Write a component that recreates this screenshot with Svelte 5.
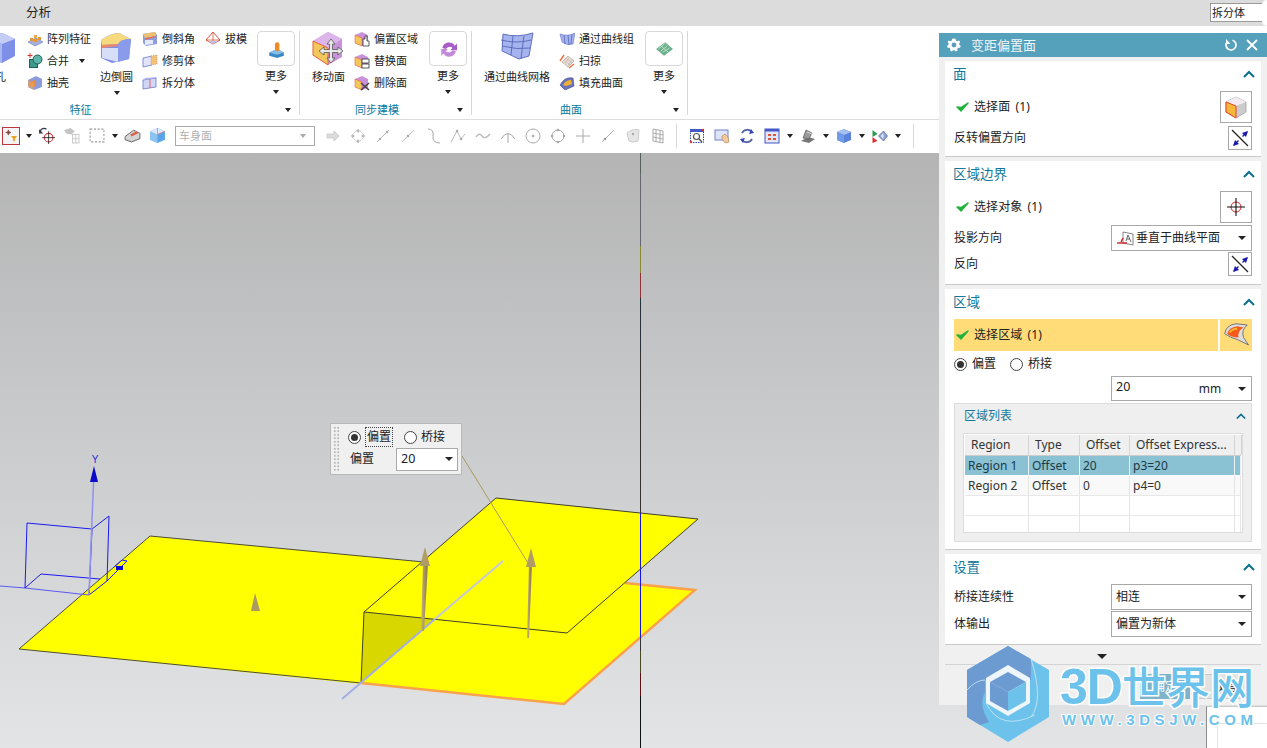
<script>
  const icons = {
    cube: '<path d="M5 8 20 2 33 8V25L20 32 5 26z" fill="#7d8fe6"/><path d="M5 8 20 2 33 8 20 13z" fill="#c3cdf5"/><path d="M5 8 20 13V32L5 26z" fill="#a9b6f0"/>',
    pattern: '<path d="M1 11 9 7 16 11 8 15z" fill="#a6afd8" stroke="#6a78b8" stroke-width=".6"/><rect x="3" y="7" width="3" height="3" fill="#e8963a"/><rect x="7" y="8" width="3" height="3" fill="#e8963a"/><rect x="7" y="4" width="3" height="3" fill="#f0a850"/><rect x="11" y="6" width="3" height="3" fill="#e8963a"/>',
    merge: '<rect x="2.500" y="6.500" width="8" height="8" fill="#3d9a8f" stroke="#1f5f58"/><circle cx="10.500" cy="6.500" r="4.500" fill="#5cb3a8" stroke="#1f5f58"/><path d="M3 0V5M.5 2.500H5.500" stroke="#d33" stroke-width="1"/>',
    shell: '<path d="M1 5 9 1 15 4V12L7 15 1 12z" fill="#8c9bdc"/><path d="M3 7 8 5V12L3 11z" fill="#e99040"/><path d="M1 5 7 8V15L1 12z" fill="#e6a060" opacity=".7"/>',
    blend: '<path d="M2 9Q12 2 20 2L32 8 30 28 13 32 2 27z" fill="#7e8ee8"/><path d="M2 9Q10 3 20 2L32 8Q22 8 19 13L3 14z" fill="#f7d97e"/><path d="M3 14 19 13 19 15 3 17z" fill="#ef8a64"/><path d="M3 17H19V31L3 27z" fill="#d6def8"/><path d="M19 14Q21 8 32 8L30 28 19 31z" fill="#8a9bec"/>',
    chamfer: '<path d="M1 3 13 1 15 4V13L4 15 1 12z" fill="#8d9de4"/><path d="M1 3 13 1 14 5 3 7z" fill="#f0c070"/><path d="M3 7 14 5V6L3 9z" fill="#e57050"/><path d="M3 9H11V13L3 14z" fill="#e4e9fb"/>',
    trim: '<path d="M1 5 10 3V12L1 14z" fill="#dfe4f8" stroke="#6a78c8" stroke-width=".8"/><path d="M9 3 15 2V11L9 12z" fill="#f3c177" stroke="#d88" stroke-width=".8" stroke-dasharray="1 1"/>',
    split: '<path d="M1 5 14 3V12L1 14z" fill="#cfd7f6" stroke="#6a78c8" stroke-width=".8"/><path d="M8 4V13" stroke="#d66" stroke-width="1"/><path d="M1 5 3 3 15 2 14 3z" fill="#a9b6f0"/>',
    draft: '<path d="M1 9 8 1 15 9 8 13z" fill="#fff" stroke="#d9533f"/><path d="M1 9 15 9M8 1V13" stroke="#d9533f" stroke-width=".8"/><path d="M3 10 8 13 13 10z" fill="#b9c3ee"/>',
    more1: '<path d="M2 11 9 8 15 11V14L9 16 2 14z" fill="#3a88c6"/><path d="M2 11 9 8 15 11 9 13z" fill="#86bde6"/><rect x="7" y="2" width="4" height="8" rx="2" fill="#f08a24"/>',
    move: '<path d="M2 10 17 1 31 8V26L17 34 2 24z" fill="#c993dc"/><path d="M2 10 17 1 31 8 17 17z" fill="#dcb6ea"/><path d="M2 10 17 17V34L2 24z" fill="#f2c75c" stroke="#e8613f"/><path d="M20 8l4 5h-2.500v5.500H27V16l5 4-5 4v-2.500h-5.500V27H24l-4 5-4-5h2.500v-5.500H13V24l-5-4 5-4v2.500h5.500V13H16z" fill="#e8e8e8" stroke="#555" stroke-width=".8"/>',
    off1: '<path d="M1 4 8 1 14 4V13L8 15 1 12z" fill="#c993dc"/><path d="M1 4 8 7V15L1 12z" fill="#f2c75c" stroke="#e8613f" stroke-width=".6"/><path d="M9 8h2V5h2v5h2v5H9z" fill="#fff" stroke="#333" stroke-width=".8"/>',
    off2: '<path d="M1 4 8 1 14 4V13L8 15 1 12z" fill="#c993dc"/><path d="M1 4 8 7V15L1 12z" fill="#f2c75c" stroke="#e8613f" stroke-width=".6"/><rect x="8" y="6" width="7" height="4" fill="#fff" stroke="#333" stroke-width=".8"/><rect x="8" y="11" width="7" height="4" fill="#fff" stroke="#333" stroke-width=".8"/>',
    off3: '<path d="M1 4 8 1 14 4V13L8 15 1 12z" fill="#c993dc"/><path d="M1 4 8 7V15L1 12z" fill="#f2c75c" stroke="#e8613f" stroke-width=".6"/><path d="M7 8 15 15M15 8 7 15" stroke="#444" stroke-width="1.500"/>',
    more2: '<path d="M3 7A6 6 0 0 1 14 5L16 3V9H10L12 7A4 4 0 0 0 6 8z" fill="#a85cc8"/><path d="M15 10A6 6 0 0 1 4 12L2 14V8H8L6 10A4 4 0 0 0 12 9z" fill="#c48ad8"/>',
    mesh: '<path d="M4 3Q18 7 34 2L30 25 20 28 3 20z" fill="#a5b4ee" stroke="#6070c0"/><path d="M2 9Q18 13 32 9M3 15Q18 19 31 17M14 5 12 24M25 5 22 27" fill="none" stroke="#5566b8" stroke-width=".9"/>',
    thru: '<path d="M1 3Q9 6 16 2L14 13Q8 15 3 11z" fill="#a5b4ee" stroke="#6070c0" stroke-width=".6"/><path d="M5 4 6 13M9 4 10 14M13 3 12 13" stroke="#5566b8" stroke-width=".8"/>',
    sweep: '<path d="M3 9 9 3 15 8 9 14z" fill="#e6e0dc" stroke="#b9a9a0" stroke-width=".8"/><path d="M5 7 11 12M7 5 13 10M6 10 10 5M9 12 13 7" stroke="#c8a898" stroke-width=".6"/><path d="M1 8 5 2M10 15 15 11" stroke="#e8703a" stroke-width="1.400"/>',
    fill: '<path d="M1 10Q6 1 14 3L15 11 6 15z" fill="#6b74b8" stroke="#3d4590" stroke-width=".6"/><path d="M4 10Q7 5 12 5L13 9 7 11z" fill="#f0b030"/>',
    more3: '<path d="M1 8 9 2 16 8 8 14z" fill="#6ab08a"/><path d="M3 8 9 3M5 10 11 5M7 11 13 7M5 5 12 11" stroke="#d5ead9" stroke-width=".7"/>',
    filter: '<path d="M5 1V7M2 4H8" stroke="#444" stroke-width="1"/><circle cx="5" cy="4" r="1.800" fill="none" stroke="#d33"/><path d="M8 8H15L12.500 11V14H10.500V11z" fill="#e8a020"/>',
    rotsel: '<path d="M2 4Q4 0 8 2" fill="none" stroke="#334" stroke-width="1.200"/><path d="M1 2V6H5z" fill="#334"/><circle cx="10" cy="10" r="4" fill="none" stroke="#d33"/><path d="M10 4V16M4 10H16" stroke="#222" stroke-width=".8"/>',
    grayhand: '<path d="M1 3 7 1 11 4 8 7 3 6z" fill="#c4c4c4"/><rect x="9" y="7" width="6" height="8" fill="none" stroke="#ccc"/><path d="M12 7V15M9 11H15" stroke="#ccc"/>',
    dashrect: '<rect x="2" y="2" width="13" height="12" fill="none" stroke="#999" stroke-dasharray="2 1.500"/>',
    wedge: '<path d="M1 9 9 3 15 6 15 11 7 14 1 12z" fill="#d4d4d4" stroke="#555" stroke-width=".8"/><path d="M6 7 12 4 13 6 7 9z" fill="#e35b4a"/>',
    cubeblue: '<path d="M1 4 8 1 15 4V12L8 15 1 12z" fill="#5aa5e8"/><path d="M1 4 8 7V15L1 12z" fill="#8cc4f0"/><path d="M1 4 8 1 15 4 8 7z" fill="#dfe8f8"/><path d="M8 1V7M8 7 15 4" stroke="#e3694f" stroke-width=".6"/>',
    g1: '<path d="M2 6H9V3L14 8 9 13V10H2z" fill="#dcdcdc" stroke="#ccc"/>',
    g2: '<path d="M8 1 15 8 8 15 1 8z" fill="none" stroke="#ccc" stroke-dasharray="2 1"/><circle cx="8" cy="3" r="1.500" fill="#bbb"/><circle cx="8" cy="13" r="1.500" fill="#bbb"/><circle cx="3" cy="8" r="1.500" fill="#bbb"/><circle cx="13" cy="8" r="1.500" fill="#bbb"/>',
    g3: '<path d="M2 14 14 2" stroke="#bbb"/><circle cx="5" cy="11" r="1.200" fill="#aaa"/><circle cx="12" cy="4" r="1.200" fill="#aaa"/>',
    g4: '<path d="M2 14 14 2" stroke="#bbb"/><circle cx="8" cy="8" r="1.300" fill="#aaa"/>',
    g5: '<path d="M3 1Q9 1 8 8T15 15" fill="none" stroke="#aaa"/>',
    g6: '<path d="M1 14 7 3 11 11 15 6" fill="none" stroke="#bbb"/><circle cx="7" cy="3" r="1.300" fill="#aaa"/><circle cx="11" cy="11" r="1.300" fill="#aaa"/>',
    g7: '<path d="M1 9Q4 4 7 8T15 6" fill="none" stroke="#bbb" stroke-width="1.400"/>',
    g8: '<path d="M1 11Q8 0 15 11M8 5V15" fill="none" stroke="#aaa"/>',
    g9: '<circle cx="8" cy="8" r="7" fill="none" stroke="#aaa"/><circle cx="8" cy="8" r="1.300" fill="#aaa"/>',
    g10: '<circle cx="8" cy="8" r="6" fill="none" stroke="#aaa"/><circle cx="8" cy="2" r="1.300" fill="#aaa"/><circle cx="8" cy="14" r="1.300" fill="#aaa"/><circle cx="2" cy="8" r="1.300" fill="#aaa"/><circle cx="14" cy="8" r="1.300" fill="#aaa"/>',
    g11: '<path d="M8 1V15M1 8H15" stroke="#aaa"/>',
    g12: '<path d="M2 14 14 2" stroke="#aaa"/><circle cx="5" cy="11" r="1.300" fill="#999"/>',
    g13: '<path d="M2 5Q8 0 14 2L13 13Q7 15 4 13z" fill="#e6e6e6" stroke="#ccc"/><circle cx="8" cy="6" r="1.200" fill="#aaa"/>',
    g14: '<path d="M3 1 13 3V15L3 13zM3 5 13 7M3 9 13 11M6 2V14M10 3V15" fill="none" stroke="#aaa"/>',
    fit: '<rect x="1.500" y="1.500" width="13" height="13" fill="#fff" stroke="#3348b8" stroke-dasharray="1.500 1"/><rect x="1" y="1" width="14" height="3" fill="#4458c8"/><circle cx="7.500" cy="8.500" r="3" fill="none" stroke="#555" stroke-width="1.200"/><path d="M10 11 13 14" stroke="#555" stroke-width="1.400"/><circle cx="14" cy="2" r="1.200" fill="#d33"/><circle cx="2" cy="14" r="1.200" fill="#d33"/>',
    pan: '<rect x="1" y="2" width="13" height="10" fill="#dde3f8" stroke="#7080c8"/><path d="M8 8 11 6 14 9 15 14 11 15 8 11z" fill="#f2c99a" stroke="#b08050" stroke-width=".6"/>',
    orbit: '<path d="M3 5A6 6 0 0 1 13 4" fill="none" stroke="#5564a8" stroke-width="1.800"/><path d="M13 11A6 6 0 0 1 3 12" fill="none" stroke="#5564a8" stroke-width="1.800"/><path d="M12 1 15 5 10 6zM4 15 1 11 6 10z" fill="#3348b8"/>',
    orient: '<rect x="1" y="1" width="14" height="14" fill="#e3e7f8" stroke="#4458c8"/><rect x="1" y="1" width="14" height="2.500" fill="#4458c8"/><path d="M4 6h3v2H4zM9 6h3v2H9zM4 10h3v2H4zM9 10h3v2H9z" fill="#e0533f"/>',
    render: '<path d="M1 13 8 9 15 11 9 15z" fill="#777"/><path d="M3 10 6 2 12 5 9 11z" fill="#9a9a9a" stroke="#444" stroke-width=".6"/><path d="M7 4 12 6" stroke="#ddd"/>',
    cubesolid: '<path d="M1 4 8 1 15 4V12L8 15 1 12z" fill="#5a82d8"/><path d="M1 4 8 1 15 4 8 7z" fill="#a9c1f0"/><path d="M1 4 8 7V15L1 12z" fill="#6f9be8"/>',
    vis: '<path d="M1 2 6 6 1 9z" fill="#2a9a4a"/><path d="M1 9 6 13 1 15z" fill="#d33"/><path d="M7 8 12 3 16 8 12 13z" fill="#8aa2e0" stroke="#556" stroke-width=".6"/><path d="M9 8 12 5V11z" fill="#e3e9fb"/>',
    faceBtn: '<path d="M2 8 12 3 22 8V18L12 24 2 18z" fill="#ccc" stroke="#999" stroke-width=".7"/><path d="M2 8 12 3 22 8 12 12z" fill="#f3eaf3"/><path d="M2 8 12 12V24L2 18z" fill="#f5b93a" stroke="#e8402a"/>',
    flip: '<path d="M2 2 18 18" stroke="#222" stroke-width="1.200"/><path d="M18 3 12 5 16 9zM3 18 9 16 5 12z" fill="#1a1ab0"/><path d="M17 4 12.500 8.500M4 17 8.500 12.500" stroke="#1a1ab0" stroke-width="1.400"/>',
    target: '<circle cx="12" cy="12" r="5" fill="none" stroke="#d22"/><path d="M12 3V21M3 12H21" stroke="#111" stroke-width="1.100"/>',
    project: '<path d="M7 2 17 4V15L7 13z" fill="#fff" stroke="#666" stroke-width=".8"/><path d="M10 11 12 5 15 12M11 9H14" fill="none" stroke="#444" stroke-width=".8"/><path d="M1 13H11" stroke="#c22" stroke-width="1.400"/><path d="M5 12 7 8" stroke="#c22" stroke-width="1.400"/>',
    region: '<path d="M3 10Q4 3 12 2L21 3Q16 7 18 13L22 19 14 15Q7 13 3 10z" fill="#ddd" stroke="#777" stroke-width=".8"/><path d="M5 10Q6 5 13 4L18 5Q13 8 14 13Q8 13 5 10z" fill="#f35a1c"/><path d="M7 9Q9 6 13 6" stroke="#f9b233" fill="none" stroke-width="1.500"/>'
  }

  const grayTools = ['g1','g2','g3','g4','g5','g6','g7','g8','g9','g10','g11','g12','g13','g14']

  // colour of the WCS axis changes along its length, page y
  const axisSegments = [
    { from: 152, to: 172, color: '#55605a' },
    { from: 172, to: 245, color: '#666670' },
    { from: 245, to: 272, color: '#8c8a30' },
    { from: 272, to: 297, color: '#8e3034' },
    { from: 297, to: 350, color: '#26303a' },
    { from: 350, to: 512, color: '#33302e' },
    { from: 512, to: 637, color: '#1414f0' },
    { from: 637, to: 650, color: '#333' },
    { from: 650, to: 672, color: '#4a4a20' },
    { from: 672, to: 695, color: '#5a1012' },
    { from: 695, to: 748, color: '#0c1210' }
  ]

  const regions = [
    { name: 'Region 1', type: 'Offset', offset: '20', expr: 'p3=20', selected: true },
    { name: 'Region 2', type: 'Offset', offset: '0', expr: 'p4=0' },
    { name: '', type: '', offset: '', expr: '' },
    { name: '', type: '', offset: '', expr: '' }
  ]
</script>

{#snippet ic(name, w, h, box)}
  <svg class="ic" width={w} height={h} viewBox={box}>{@html icons[name]}</svg>
{/snippet}

{#snippet small(name, text)}
  <div class="small">{@render ic(name, 16, 16, '0 0 16 16')}<span>{text}</span></div>
{/snippet}

{#snippet big(name, label, arrow)}
  <div class="big">
    {@render ic(name, 36, 36, '0 0 36 36')}
    <span>{label}</span>
    {#if arrow}<i class="tri"></i>{/if}
  </div>
{/snippet}

{#snippet more(name)}
  <div class="more">
    <div class="more-box">{@render ic(name, 18, 18, '0 0 16 16')}</div>
    <span>更多</span>
    <i class="tri"></i>
  </div>
{/snippet}

{#snippet chevron()}
  <svg class="chev" width="12" height="8" viewBox="0 0 12 8"><path d="M1 7 6 2 11 7" fill="none" stroke="#0b6f8f" stroke-width="2"/></svg>
{/snippet}

{#snippet check()}
  <svg class="check" width="13" height="12" viewBox="0 0 13 12"><path d="M1 6 5 10 12 2 5 6.500z" fill="#1fb33c" stroke="#1fb33c" stroke-width="1.400" stroke-linejoin="round"/></svg>
{/snippet}

{#snippet select(text, name)}
  <div class="select">
    {#if name}{@render ic(name, 18, 16, '0 0 18 16')}{/if}
    <span>{text}</span><i class="tri"></i>
  </div>
{/snippet}

<div class="app">
  <div class="menubar">
    <span class="menu-item">分析</span>
    <div class="cmd-find">拆分体</div>
    <div class="cmd-cap"></div>
  </div>

  <div class="ribbon">
    <section class="group g-feature">
      <div class="tools">
        <div class="big clip">{@render ic('cube', 36, 36, '0 0 36 36')}<span>孔</span></div>
        <div class="col">
          {@render small('pattern', '阵列特征')}
          <div class="small">{@render ic('merge', 16, 16, '0 0 16 16')}<span>合并</span><i class="tri tri-inline"></i></div>
          {@render small('shell', '抽壳')}
        </div>
        {@render big('blend', '边倒圆', true)}
        <div class="col">
          {@render small('chamfer', '倒斜角')}
          {@render small('trim', '修剪体')}
          {@render small('split', '拆分体')}
        </div>
        <div class="col">{@render small('draft', '拔模')}</div>
        {@render more('more1')}
      </div>
      <div class="group-foot"><span>特征</span><i class="tri"></i></div>
    </section>

    <section class="group g-sync">
      <div class="tools">
        {@render big('move', '移动面')}
        <div class="col">
          {@render small('off1', '偏置区域')}
          {@render small('off2', '替换面')}
          {@render small('off3', '删除面')}
        </div>
        {@render more('more2')}
      </div>
      <div class="group-foot"><span>同步建模</span><i class="tri"></i></div>
    </section>

    <section class="group g-surf">
      <div class="tools">
        {@render big('mesh', '通过曲线网格')}
        <div class="col">
          {@render small('thru', '通过曲线组')}
          {@render small('sweep', '扫掠')}
          {@render small('fill', '填充曲面')}
        </div>
        {@render more('more3')}
      </div>
      <div class="group-foot"><span>曲面</span><i class="tri"></i></div>
    </section>
  </div>

  <div class="toolbar">
    <div class="filter-btn">{@render ic('filter', 14, 14, '0 0 16 16')}</div>
    <i class="tri tb-arrow"></i>
    <div class="tb">{@render ic('rotsel', 17, 17, '0 0 16 16')}</div>
    <div class="tb">{@render ic('grayhand', 17, 17, '0 0 16 16')}</div>
    <div class="tb">{@render ic('dashrect', 17, 17, '0 0 16 16')}</div>
    <i class="tri tb-arrow"></i>
    <div class="tb">{@render ic('wedge', 17, 17, '0 0 16 16')}</div>
    <div class="tb">{@render ic('cubeblue', 17, 17, '0 0 16 16')}</div>
    <div class="body-select"><span>车身面</span><i class="tri tri-gray"></i></div>
    <div class="gray-tools">
      {#each grayTools as t}
        <div class="tb">{@render ic(t, 16, 16, '0 0 16 16')}</div>
      {/each}
    </div>
    <div class="tb-sep"></div>
    <div class="tb">{@render ic('fit', 16, 16, '0 0 16 16')}</div>
    <div class="tb">{@render ic('pan', 16, 16, '0 0 16 16')}</div>
    <div class="tb">{@render ic('orbit', 16, 16, '0 0 16 16')}</div>
    <div class="tb">{@render ic('orient', 16, 16, '0 0 16 16')}</div>
    <i class="tri tb-arrow"></i>
    <div class="tb">{@render ic('render', 16, 16, '0 0 16 16')}</div>
    <i class="tri tb-arrow"></i>
    <div class="tb">{@render ic('cubesolid', 16, 16, '0 0 16 16')}</div>
    <i class="tri tb-arrow"></i>
    <div class="tb">{@render ic('vis', 17, 16, '0 0 16 16')}</div>
    <i class="tri tb-arrow"></i>
    <div class="tb-sep tb-sep-end"></div>
  </div>

  <div class="viewport">
    <svg class="scene" viewBox="0 152 1267 596" width="1267" height="596">
      <defs>
        <linearGradient id="shaft" x1="0" x2="1" y1="0" y2="0">
          <stop offset="0" stop-color="#c9b478"/>
          <stop offset="1" stop-color="#84744a"/>
        </linearGradient>
      </defs>

      <!-- lower sheet -->
      <path d="M361 682 564 703 695 589 480 567 364 611z" fill="#ffff00"/>
      <path d="M625 582 695 589 564 703 361 682" fill="none" stroke="#f9a24c" stroke-width="2.500"/>
      <!-- left sheet -->
      <path d="M19 648 150 535 424 561 364 611 361 683z" fill="#ffff00"/>
      <path d="M19 648 150 535 424 561M19 648 361 682" fill="none" stroke="#4b4b3c" stroke-width="1"/>
      <!-- step face -->
      <path d="M364 611 361 682 435 618z" fill="#d8d800"/>
      <!-- upper sheet -->
      <path d="M364 611 496 497 698 518 567 632z" fill="#ffff00"/>
      <path d="M361 682 364 611 496 497 698 518 567 632 364 611" fill="none" stroke="#3f3f30" stroke-width="1"/>

      {#each axisSegments as s}
        <path d="M640.500 {s.from}V{s.to}" stroke={s.color} stroke-width="1"/>
      {/each}

      <!-- split line -->
      <path d="M342 698 435 618" stroke="#a4aee6" stroke-width="2"/>
      <path d="M435 618 503 560" stroke="#c4c8dc" stroke-width="2"/>

      <!-- leader and arrows -->
      <path d="M462 455 528 562" stroke="#a89a62" stroke-width="1"/>
      <path d="M421 630 423 562H428L424 630z" fill="url(#shaft)"/>
      <path d="M425 546 420 565H430z" fill="#b09c64"/>
      <path d="M527 637 529 562H532L529 637z" fill="url(#shaft)"/>
      <path d="M531 547 526 566H536z" fill="#b09c64"/>
      <path d="M255 592 251 610H260z" fill="#ab9a62"/>

      <!-- datum csys -->
      <g fill="none" stroke="#1a1af0" stroke-width="1">
        <path d="M0 585 25 587 89 594" stroke="#5a5af0"/>
        <path d="M25 587 27 522 92 528 109 515 107 580"/>
        <path d="M25 587 41 573 100 578"/>
        <path d="M92 528 89 594 107 580"/>
        <path d="M107 580 127 560 122 559 114 566"/>
        <path d="M89 594 94 470" stroke="#8f90ee" stroke-width="1.500"/>
      </g>
      <path d="M94 465 90 481H98z" fill="#0a0ac8"/>
      <text x="95" y="462" text-anchor="middle" class="axis-label">Y</text>
      <rect x="116" y="565" width="7" height="4" fill="#0a0ac8"/>
    </svg>

    <div class="popup">
      <div class="grip"></div>
      <div class="popup-body">
        <div class="popup-row">
          <span class="radio on"></span><span class="focus">偏置</span>
          <span class="radio"></span><span>桥接</span>
        </div>
        <div class="popup-row second">
          <span class="popup-label">偏置</span>
          <div class="popup-select"><span>20</span><i class="tri"></i></div>
        </div>
      </div>
    </div>
  </div>

  <aside class="panel">
    <header class="titlebar">
      <svg width="16" height="16" viewBox="0 0 16 16"><path d="M8 1.500 9.500 1.800 10 3.500 11.500 4.200 13 3.400 14.200 5 13.200 6.300 13.400 8 14.800 9 14 10.800 12.300 10.700 11.200 12 11.500 13.700 9.800 14.500 8.600 13.300H7L5.800 14.400 4.100 13.600 4.500 12 3.400 10.800 1.700 10.800 1 9 2.400 8 2.600 6.300 1.600 5 2.800 3.400 4.300 4.200 5.800 3.500 6.200 1.800z" fill="#fff"/><circle cx="8" cy="8" r="2.400" fill="#55a0bb"/></svg>
      <span class="title">变距偏置面</span>
      <svg class="reset" width="14" height="14" viewBox="0 0 14 14"><path d="M8.500 2.200A5 5 0 1 1 3 4" fill="none" stroke="#fff" stroke-width="1.700"/><path d="M2 1V6H6.500z" fill="#fff"/></svg>
      <svg width="14" height="14" viewBox="0 0 14 14"><path d="M2 2 12 12M12 2 2 12" stroke="#fff" stroke-width="1.800"/></svg>
    </header>

    <div class="panel-body">
      <section class="block s-face">
        <h3>面{@render chevron()}</h3>
        <div class="row tall">
          {@render check()}<span class="sel-text">选择面 (1)</span>
          <div class="btn btn-lg">{@render ic('faceBtn', 24, 26, '0 0 24 26')}</div>
        </div>
        <div class="row">
          <span>反转偏置方向</span>
          <div class="btn btn-sm">{@render ic('flip', 20, 20, '0 0 20 20')}</div>
        </div>
      </section>

      <section class="block s-bound">
        <h3>区域边界{@render chevron()}</h3>
        <div class="row tall">
          {@render check()}<span class="sel-text">选择对象 (1)</span>
          <div class="btn btn-lg">{@render ic('target', 24, 24, '0 0 24 24')}</div>
        </div>
        <div class="row sel-row">
          <span>投影方向</span>
          {@render select('垂直于曲线平面', 'project')}
        </div>
        <div class="row">
          <span>反向</span>
          <div class="btn btn-sm">{@render ic('flip', 20, 20, '0 0 20 20')}</div>
        </div>
      </section>

      <section class="block s-region">
        <h3>区域{@render chevron()}</h3>
        <div class="pick">
          <div class="pick-main">{@render check()}<span class="sel-text">选择区域 (1)</span></div>
          <div class="pick-btn">{@render ic('region', 30, 28, '0 0 24 22')}</div>
        </div>
        <div class="radios">
          <span class="radio on"></span><span>偏置</span>
          <span class="radio"></span><span>桥接</span>
        </div>
        <div class="row sel-row value">
          <div class="select"><span class="num">20</span><span class="unit">mm</span><i class="tri"></i></div>
        </div>
        <div class="listbox">
          <h4>区域列表{@render chevron()}</h4>
          <div class="table">
            <div class="tr head">
              <span>Region</span><span>Type</span><span>Offset</span><span>Offset Express...</span><span></span>
            </div>
            {#each regions as r}
              <div class="tr" class:selected={r.selected}>
                <span>{r.name}</span><span>{r.type}</span><span>{r.offset}</span><span>{r.expr}</span><span></span>
              </div>
            {/each}
          </div>
        </div>
      </section>

      <section class="block s-settings">
        <h3>设置{@render chevron()}</h3>
        <div class="row sel-row">
          <span>桥接连续性</span>
          {@render select('相连')}
        </div>
        <div class="row sel-row">
          <span>体输出</span>
          {@render select('偏置为新体')}
        </div>
      </section>
    </div>

    <div class="expander"><i class="tri tri-wide"></i></div>
    <div class="actions">
      <div class="action primary">确定</div>
      <div class="action cancel">取消</div>
    </div>
  </aside>

  <div class="corner-window"><div></div></div>

  <div class="watermark">
    <svg width="84" height="98" viewBox="966 645 84 98">
      <path d="M1008 646 1049 670V717L1008 742 967 717V670z" fill="#6cc2ea"/>
      <path d="M967 670 1008 646 1031 659 1031 680 1008 666 985 680V692Q978 705 989 722L980 725 967 717z" fill="#6b9bd0"/>
      <path d="M1031 659Q1044 700 1031 717" fill="none" stroke="#cfeaf8" stroke-width=".8"/>
      <path d="M986 703Q1000 732 1035 715" fill="none" stroke="#cfeaf8" stroke-width=".8"/>
      <path d="M967 690Q976 680 985 680" fill="none" stroke="#cfeaf8" stroke-width=".8"/>
      <path d="M1008 665 1030 678V703L1008 716 986 703V678z" fill="#eef6fb"/>
      <path d="M1008 672 1026 682 1008 692 990 682z" fill="#6b9bd0"/>
      <path d="M990 682 1008 692V711L990 701z" fill="#6b9bd0"/>
      <path d="M1026 682 1008 692V711L1026 701z" fill="#6cc2ea"/>
    </svg>
    <div class="wm-text">
      <div class="wm-main"><span class="wm-3d">3D</span>世界网</div>
      <div class="wm-url">WWW.3DSJW.COM</div>
    </div>
  </div>
</div>

<style>
  :global(body) {
    margin: 0;
    background: #fff;
  }

  .app {
    position: relative;
    width: 1267px;
    height: 748px;
    overflow: hidden;
    display: flex;
    flex-direction: column;
    font-family: "Noto Sans", "Noto Sans CJK SC", sans-serif;
    font-size: 11px;
    color: #222;
    line-height: 16px;
  }

  .ic { display: block; flex: none; }

  .tri {
    display: block;
    flex: none;
    width: 0;
    height: 0;
    border-left: 3.500px solid transparent;
    border-right: 3.500px solid transparent;
    border-top: 4px solid #222;
  }

  /* menu */
  .menubar {
    height: 26px;
    flex: none;
    background: #dcdcdc;
    display: flex;
    align-items: center;
    padding-left: 26px;
    box-sizing: border-box;
  }
  .menu-item { font-size: 12.500px; }
  .cmd-find {
    margin-left: auto;
    width: 52px;
    height: 19px;
    box-sizing: border-box;
    margin-bottom: 1px;
    background: #fff;
    border: 1px solid #9a9a9a;
    border-right: none;
    font-size: 11px;
    line-height: 18px;
    padding-left: 1px;
  }
  .cmd-cap {
    width: 5px;
    height: 26px;
    background: #fff;
    border-radius: 6px 0 0 6px;
  }

  /* ribbon */
  .ribbon {
    height: 94px;
    flex: none;
    display: flex;
    margin-left: -121px;
    border-bottom: 1px solid #dcdcdc;
    box-sizing: border-box;
  }
  .group {
    position: relative;
    display: flex;
    flex-direction: column;
    padding-right: 4px;
    margin-top: 5px;
    margin-bottom: 4px;
    border-right: 1px solid #d8d8d8;
  }
  .tools {
    display: grid;
    column-gap: 9px;
    height: 73px;
    align-items: start;
  }
  .g-feature .tools { grid-template-columns: 139px 64px 33px 54px 43px 38px; }
  .g-sync .tools { padding-left: 12px; grid-template-columns: 33px 66px 38px; }
  .g-surf .tools { padding-left: 12px; grid-template-columns: 66px 77px 38px; }
  .group-foot {
    display: flex;
    align-items: center;
    height: 11px;
    color: #0a78a0;
    padding-right: 4px;
  }
  .group-foot span { flex: 1; text-align: center; padding-right: 3px; }

  .col { display: flex; flex-direction: column; gap: 6px; }
  .small { display: flex; align-items: center; gap: 4px; height: 16px; white-space: nowrap; }
  .tri-inline { margin-left: 6px; }

  .big {
    display: flex;
    flex-direction: column;
    align-items: center;
    white-space: nowrap;
  }
  .big span { margin-top: 2px; }
  .big .tri { margin-top: 6px; }
  .big.clip { align-items: flex-end; }
  .big.clip span { margin-right: 12px; }

  .more { display: flex; flex-direction: column; align-items: center; }
  .more-box {
    width: 38px;
    height: 35px;
    box-sizing: border-box;
    border: 1px solid #d8d8d8;
    border-radius: 4px;
    display: flex;
    align-items: center;
    justify-content: center;
  }
  .more span { margin-top: 2px; }
  .more .tri { margin-top: 6px; }

  /* toolbar */
  .toolbar {
    height: 33px;
    flex: none;
    box-sizing: border-box;
    display: flex;
    align-items: center;
    padding: 0 0 2px 2px;
    background: #fff;
  }
  .filter-btn {
    width: 16px;
    height: 16px;
    border: 1px solid #c0343c;
    display: flex;
    align-items: center;
    justify-content: center;
    margin-right: 3px;
    background: #f4f4f4;
  }
  .tb {
    width: 25px;
    flex: none;
    display: flex;
    justify-content: center;
  }
  .tb-arrow { margin: 0 2.500px; }
  .body-select {
    width: 140px;
    height: 20px;
    box-sizing: border-box;
    border: 1px solid #a8a8a8;
    display: flex;
    align-items: center;
    justify-content: space-between;
    padding: 0 8px 0 3px;
    color: #b0b0b0;
    margin-left: 5px;
  }
  .tri-gray { border-top-color: #aaa; }
  .gray-tools { display: flex; margin-left: 5px; }
  .tb-sep { width: 1px; height: 24px; background: #d8d8d8; margin: 0 7px 0 6px; }
  .tb-sep-end { margin-left: 10px; }

  /* viewport */
  .viewport {
    position: relative;
    flex: 1;
    background: linear-gradient(#b4b4b4, #c9cacc 45%, #e3e4e6);
  }
  .scene { position: absolute; left: 0; top: 0; display: block; }
  .axis-label {
    font-family: "Liberation Sans", sans-serif;
    font-size: 10px;
    fill: #2a2ad8;
  }

  .popup {
    position: absolute;
    left: 330px;
    top: 270px;
    width: 132px;
    height: 52px;
    box-sizing: border-box;
    background: #f0f0f0;
    border: 1px solid #b8b8b8;
    display: flex;
    font-size: 12px;
  }
  .grip {
    width: 7px;
    margin: 2px 0 2px 2px;
    background-image: radial-gradient(circle, #b5b5b5 1px, transparent 1.200px);
    background-size: 3.500px 3.500px;
  }
  .popup-body { flex: 1; display: flex; flex-direction: column; padding-left: 8px; }
  .popup-row { display: flex; align-items: center; height: 24px; margin-top: 1px; }
  .popup-row.second { margin-top: -2px; }
  .popup-label { margin-left: 2px; width: 46px; }
  .focus { outline: 1px dotted #444; padding: 1px; margin-left: 1px; margin-right: 12px; }
  .popup-select {
    width: 62px;
    height: 23px;
    box-sizing: border-box;
    background: #fff;
    border: 1px solid #aaa;
    display: flex;
    align-items: center;
    justify-content: space-between;
    padding: 0 4px 0 4px;
    font-size: 12.500px;
  }
  .popup-select .tri { border-left-width: 4px; border-right-width: 4px; }

  .radio {
    position: relative;
    width: 11px;
    height: 11px;
    flex: none;
    border: 1px solid #444;
    border-radius: 50%;
    background: #fff;
    margin-right: 4px;
  }
  .radio.on::after {
    content: '';
    position: absolute;
    left: 2px;
    top: 2px;
    width: 7px;
    height: 7px;
    border-radius: 50%;
    background: #333;
  }

  /* dialog */
  .panel {
    position: absolute;
    left: 939px;
    top: 33px;
    width: 328px;
    height: 672px;
    background: #f0f0f0;
    display: flex;
    flex-direction: column;
    font-size: 12px;
  }
  .titlebar {
    height: 24px;
    flex: none;
    background: #55a0bb;
    display: flex;
    align-items: center;
    padding: 0 8px 0 7px;
    gap: 6px;
    color: #fff;
  }
  .title { flex: 1; font-size: 13px; margin-left: 3px; color: #f2f7f9; }
  .reset { margin-right: 1px; }

  .panel-body {
    padding: 4px 6px 0;
    display: flex;
    flex-direction: column;
  }
  .block {
    position: relative;
    background: #fff;
    border-bottom: 1px solid #c9c9c9;
    box-sizing: border-box;
    padding: 0 9px;
    margin-bottom: 4px;
  }
  h3 {
    margin: 0;
    height: 26px;
    font-weight: 400;
    font-size: 13.500px;
    color: #12799c;
    line-height: 26px;
    display: flex;
    align-items: center;
    justify-content: space-between;
    margin-left: -1px;
    margin-right: -3px;
  }
  .s-face { height: 96px; }
  .s-bound { height: 124px; }
  .s-region { height: 261px; margin-bottom: 4px; }
  .s-settings { height: 91px; }

  .row { display: flex; align-items: center; height: 26px; }
  .row.tall { height: 32px; margin-top: 4px; margin-bottom: 2px; }
  .check { margin: 0 5px 0 2px; flex: none; }
  .sel-text { flex: 1; word-spacing: 2px; letter-spacing: .1px; }
  .row > span:first-child { flex: 1; }

  .btn {
    box-sizing: border-box;
    border: 1px solid #a8a8a8;
    display: flex;
    align-items: center;
    justify-content: center;
    background: #fff;
  }
  .btn-lg { width: 32px; height: 32px; }
  .btn-sm { width: 24px; height: 24px; }

  .sel-row { height: 26px; }
  .select {
    width: 141px;
    height: 26px;
    box-sizing: border-box;
    border: 1px solid #a8a8a8;
    display: flex;
    align-items: center;
    gap: 2px;
    padding: 0 5px 0 4px;
    background: #fff;
  }
  .select > span { flex: 1; }
  .select > .num { flex: 0 0 70px; font-size: 12.500px; margin-top: -3px; }
  .select > .unit { flex: 0 0 32px; text-align: center; margin-left: 6px; }
  .select .tri { margin-left: auto; border-left-width: 4px; border-right-width: 4px; }
  .s-settings .sel-row + .sel-row { margin-top: 1px; }
  .s-settings h3 { margin-bottom: 4px; }

  .pick { display: flex; gap: 2px; height: 32px; margin-top: 4px; }
  .pick-main {
    flex: 1;
    background: #ffdc78;
    display: flex;
    align-items: center;
  }
  .pick-btn {
    width: 32px;
    background: #ffdc78;
    display: flex;
    align-items: center;
    justify-content: center;
  }
  .radios { display: flex; align-items: center; height: 24px; margin-top: 1px; }
  .radios .radio { margin-right: 5px; }
  .radios span:nth-child(2) { margin-right: 14px; }
  .value { justify-content: flex-end; height: 25px; }
  .value .select { height: 25px; }

  .listbox {
    margin-top: 2px;
    height: 139px;
    box-sizing: border-box;
    background: #efefef;
    border: 1px solid #dcdcdc;
    padding: 0 8px;
  }
  h4 {
    margin: 0;
    height: 29px;
    box-sizing: border-box;
    padding-bottom: 5px;
    font-weight: 400;
    font-size: 12px;
    color: #12799c;
    display: flex;
    align-items: center;
    justify-content: space-between;
    margin-right: -3px;
    margin-left: 1px;
  }
  h4 .chev { width: 10px; }
  .table {
    height: 100px;
    box-sizing: border-box;
    background: #fff;
    border: 1px solid #dcdcdc;
    padding: 1px;
    width: 280px;
    overflow: hidden;
  }
  .tr {
    display: grid;
    grid-template-columns: 64px 51px 50px 105px 6px;
    height: 20px;
    box-sizing: border-box;
    line-height: 19px;
    font-size: 12px;
    background: #fff;
    border-bottom: 1px solid #e8e8e8;
  }
  .tr:nth-child(3) { background: #f9f9f9; }
  .tr span {
    padding-left: 3px;
    border-right: 1px solid #e4e4e4;
    white-space: nowrap;
    overflow: hidden;
    color: #333;
  }
  .tr.head { height: 21px; background: #efefef; line-height: 20px; border-bottom: 1px solid #ccc; }
  .tr.head span { padding-left: 6px; border-right-color: #d4d4d4; color: #333; }
  .tr.selected { background: #8ac1d3; border-bottom-color: #fff; }
  .tr.selected span { border-right-color: #e8f2f5; color: #1c3a44; }

  .expander {
    height: 15px;
    display: flex;
    justify-content: center;
    align-items: center;
    padding-right: 2px;
    border-bottom: 1px solid #d4d4d4;
    margin-left: 6px;
    margin-right: 6px;
  }
  .tri-wide { border-left-width: 5px; border-right-width: 5px; border-top-width: 5px; }

  .actions {
    display: flex;
    justify-content: flex-end;
    gap: 7px;
    padding: 9px 15px 0;
  }
  .action {
    width: 50px;
    height: 25px;
    box-sizing: border-box;
    border: 1px solid #c8c8c8;
    background: #e2e2e2;
    text-align: center;
    line-height: 23px;
  }
  .action.primary { background: #7fb4c8; color: #fff; border-color: #7fb4c8; }
  .action.cancel { width: 55px; }

  .corner-window {
    position: absolute;
    left: 1206px;
    top: 706px;
    width: 61px;
    height: 42px;
    box-sizing: border-box;
    background: #fff;
    border-left: 1px solid #8c8c8c;
    border-top: 1px solid #c8c8c8;
    padding: 16px 0 0 10px;
  }
  .corner-window div { border-top: 1px solid #e4e4e4; border-left: 1px solid #e4e4e4; height: 100%; }

  /* site watermark over the corner of the window */
  .watermark {
    position: absolute;
    left: 966px;
    top: 645px;
    display: flex;
    gap: 10px;
    pointer-events: none;
  }
  .wm-text { color: #6cc2ea; white-space: nowrap; }
  .wm-main {
    font-family: "Noto Sans CJK SC", sans-serif;
    font-size: 44px;
    font-weight: 500;
    line-height: 50px;
    margin-top: 15px;
    -webkit-text-stroke: 3px #fff;
    paint-order: stroke fill;
  }
  .wm-3d {
    font-family: "Liberation Sans", sans-serif;
    font-size: 50px;
    font-weight: 700;
    letter-spacing: -1px;
  }
  .wm-url {
    font-family: "Liberation Sans", sans-serif;
    font-size: 15px;
    font-weight: 700;
    line-height: 16px;
    letter-spacing: 4.600px;
    -webkit-text-stroke: 2px #fff;
    paint-order: stroke fill;
    margin-left: 2px;
  }
</style>
